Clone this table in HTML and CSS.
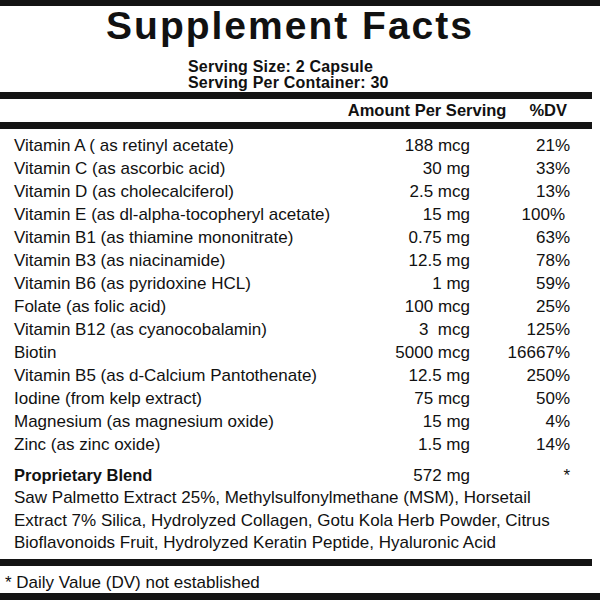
FILE: index.html
```html
<!DOCTYPE html>
<html lang="en">
<head>
<meta charset="utf-8">
<title>Supplement Facts</title>
<link rel="stylesheet" href="styles.css">
</head>
<body>
<div class="label">
  <div class="bar bar-full bar-top"></div>
  <h1 class="title">Supplement Facts</h1>
  <div class="serving">
    <div>Serving Size: 2 Capsule</div>
    <div>Serving Per Container: 30</div>
  </div>
  <div class="bar bar-serv"></div>
  <div class="head">
    <span>Amount Per Serving</span>
    <span>%DV</span>
  </div>
  <div class="bar bar-head"></div>
  <div class="rows">
    <div class="row"><span class="name">Vitamin A ( as retinyl acetate)</span><span class="amt">188 mcg</span><span class="dv">21%</span></div>
    <div class="row"><span class="name">Vitamin C (as ascorbic acid)</span><span class="amt">30 mg</span><span class="dv">33%</span></div>
    <div class="row"><span class="name">Vitamin D (as cholecalciferol)</span><span class="amt">2.5 mcg</span><span class="dv">13%</span></div>
    <div class="row"><span class="name">Vitamin E (as dl-alpha-tocopheryl acetate)</span><span class="amt">15 mg</span><span class="dv dv-narrow">100%</span></div>
    <div class="row"><span class="name">Vitamin B1 (as thiamine mononitrate)</span><span class="amt">0.75 mg</span><span class="dv">63%</span></div>
    <div class="row"><span class="name">Vitamin B3 (as niacinamide)</span><span class="amt">12.5 mg</span><span class="dv">78%</span></div>
    <div class="row"><span class="name">Vitamin B6 (as pyridoxine HCL)</span><span class="amt">1 mg</span><span class="dv">59%</span></div>
    <div class="row"><span class="name">Folate (as folic acid)</span><span class="amt">100 mcg</span><span class="dv">25%</span></div>
    <div class="row"><span class="name">Vitamin B12 (as cyanocobalamin)</span><span class="amt">3&nbsp; mcg</span><span class="dv">125%</span></div>
    <div class="row"><span class="name">Biotin</span><span class="amt">5000 mcg</span><span class="dv">16667%</span></div>
    <div class="row"><span class="name">Vitamin B5 (as d-Calcium Pantothenate)</span><span class="amt">12.5 mg</span><span class="dv">250%</span></div>
    <div class="row"><span class="name">Iodine (from kelp extract)</span><span class="amt">75 mcg</span><span class="dv">50%</span></div>
    <div class="row"><span class="name">Magnesium (as magnesium oxide)</span><span class="amt">15 mg</span><span class="dv">4%</span></div>
    <div class="row"><span class="name">Zinc (as zinc oxide)</span><span class="amt">1.5 mg</span><span class="dv">14%</span></div>
  </div>
  <div class="row blend"><span class="name blend-name">Proprietary Blend</span><span class="amt">572 mg</span><span class="dv">*</span></div>
  <p class="ingredients">Saw Palmetto Extract 25%, Methylsulfonylmethane (MSM), Horsetail Extract 7% Silica, Hydrolyzed Collagen, Gotu Kola Herb Powder, Citrus Bioflavonoids Fruit, Hydrolyzed Keratin Peptide, Hyaluronic Acid</p>
  <div class="bar bar-ingr"></div>
  <p class="note">* Daily Value (DV) not established</p>
  <div class="bar bar-full bar-bottom"></div>
</div>
</body>
</html>
```
FILE: styles.css
```css
html, body {
  margin: 0;
  padding: 0;
  background: #ffffff;
}

body {
  font-family: "Liberation Sans", Arial, sans-serif;
  color: #111111;
}

.label {
  width: 600px;
  height: 600px;
  overflow: hidden;
}

.bar {
  width: 592px;
  height: 7px;
  background: #141414;
}

.bar-full {
  width: 600px;
}

.bar-top {
  height: 6px;
}

.title {
  margin: 0;
  padding: 2px 14px 0 0;
  width: 594px;
  box-sizing: border-box;
  text-align: center;
  font-size: 39px;
  font-weight: 700;
  letter-spacing: 2px;
  line-height: 36px;
}

.serving {
  margin: 14.5px 0 0 188px;
  font-size: 16px;
  font-weight: 700;
  letter-spacing: 0.2px;
  line-height: 16px;
}

.bar-serv {
  margin-top: 1.5px;
}

.head {
  display: flex;
  justify-content: flex-end;
  gap: 23px;
  width: 594px;
  box-sizing: border-box;
  padding-right: 27px;
  font-size: 16.5px;
  font-weight: 700;
  line-height: 22px;
}

.bar-head {
  margin-top: 1px;
}

.rows {
  padding-top: 5px;
}

.row {
  display: grid;
  grid-template-columns: 1fr 120px 100px;
  width: 594px;
  box-sizing: border-box;
  padding: 0 24px 0 14px;
  font-size: 17px;
  line-height: 23px;
  white-space: nowrap;
}

.amt,
.dv {
  text-align: right;
}

.dv-narrow {
  padding-right: 5px;
}

.blend {
  margin-top: 8px;
}

.blend-name {
  font-weight: 700;
  font-size: 16.5px;
}

.ingredients {
  margin: 0;
  padding-left: 14px;
  width: 560px;
  font-size: 17px;
  line-height: 22.5px;
}

.bar-ingr {
  margin-top: 4px;
}

.note {
  margin: 0;
  padding: 6px 0 0 5px;
  font-size: 17px;
  line-height: 21.5px;
}

.bar-bottom {
  height: 8px;
}
```
